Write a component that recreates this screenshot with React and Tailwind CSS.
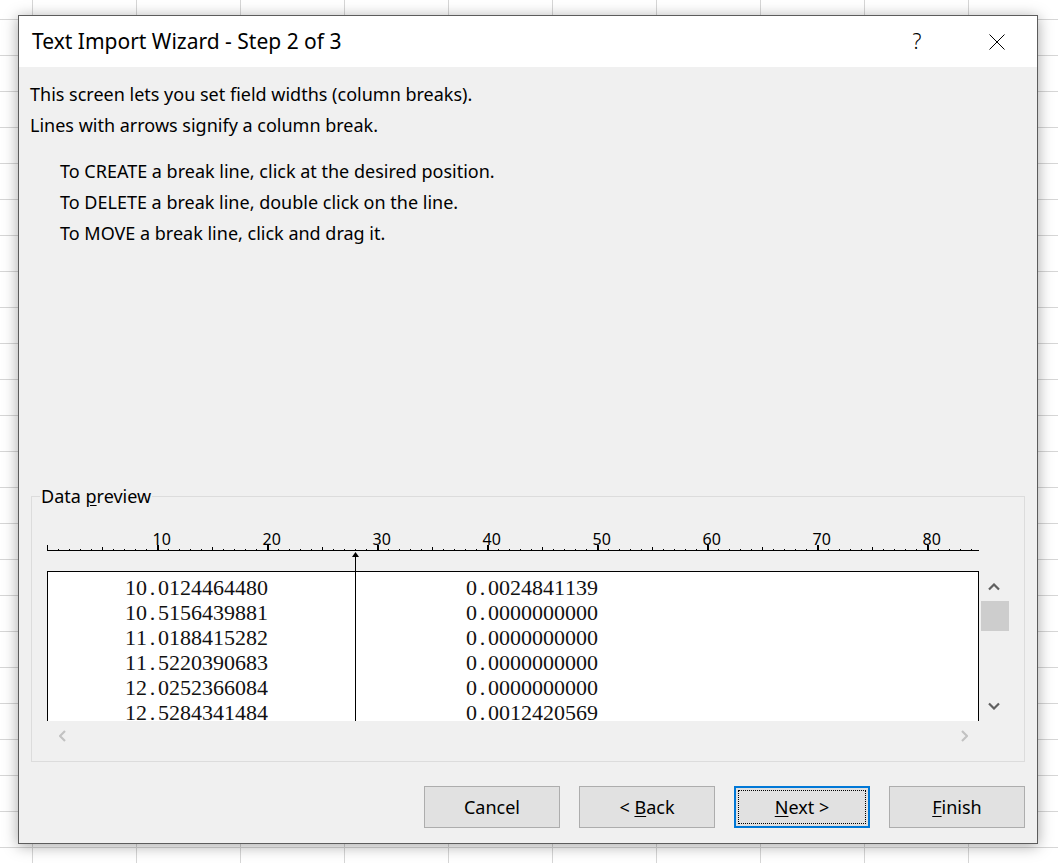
const rows = [
  ["10.0124464480", "0.0024841139"],
  ["10.5156439881", "0.0000000000"],
  ["11.0188415282", "0.0000000000"],
  ["11.5220390683", "0.0000000000"],
  ["12.0252366084", "0.0000000000"],
  ["12.5284341484", "0.0012420569"],
];

function pad(a, b) {
  return " ".repeat(7) + a + " ".repeat(38 - 7 - a.length) + b;
}

function Ruler() {
  const ticks = [];
  for (let i = 0; i <= 84; i++) {
    if (i === 0) ticks.push(<rect key={i} x={0} y={17} width={1} height={5} />);
    else if (i % 10 === 0) ticks.push(<rect key={i} x={11 * i} y={17} width={2} height={5} />);
    else if (i % 5 === 0) ticks.push(<rect key={i} x={11 * i} y={19} width={1} height={3} />);
    else ticks.push(<rect key={i} x={11 * i} y={21} width={1} height={1} />);
  }
  const labels = [10, 20, 30, 40, 50, 60, 70, 80];
  return (
    <svg width="932" height="28" className="block">
      <g fill="#000">
        {ticks}
        <rect x={0} y={22} width={932} height={1} />
      </g>
      {labels.map((n) => (
        <text key={n} x={11 * n - 4.5} y={17} fontSize="16" fontFamily="Noto Sans, sans-serif" fill="#000">
          {n}
        </text>
      ))}
    </svg>
  );
}

function Chevron({ dir, color }) {
  const pts = {
    up: "1,6.5 6,1.5 11,6.5",
    down: "1,1.5 6,6.5 11,1.5",
    left: "6,1 1,6 6,11",
    right: "1,1 6,6 1,11",
  }[dir];
  const vertical = dir === "up" || dir === "down";
  return (
    <svg width={vertical ? 12 : 7} height={vertical ? 8 : 12}>
      <polyline points={pts} fill="none" stroke={color} strokeWidth="2.2" />
    </svg>
  );
}

function Btn({ children, focused }) {
  if (focused) {
    return (
      <button className="w-[136px] h-[42px] border-2 border-[#0078d7] bg-[#e1e1e1] p-[2px]">
        <span className="flex h-full w-full items-center justify-center border border-dotted border-black">
          <span>{children}</span>
        </span>
      </button>
    );
  }
  return (
    <button className="w-[136px] h-[42px] border border-[#adadad] bg-[#e1e1e1] flex items-center justify-center">
      <span>{children}</span>
    </button>
  );
}

export default function App() {
  return (
    <div className="w-[1058px] h-[863px] overflow-hidden bg-white pt-[15px] pl-[18px] bg-[linear-gradient(to_right,#d6d6d6_1px,transparent_1px),linear-gradient(to_bottom,#d6d6d6_1px,transparent_1px)] bg-size-[104px_36px] bg-position-[32px_19px] font-['Noto_Sans',sans-serif] text-black">
      <div className="w-[1020px] h-[829px] border border-[#5c5c5c] bg-[#f0f0f0] flex flex-col shadow-[0_2px_14px_rgba(0,0,0,0.35)]">
        <div className="h-[51px] bg-white flex items-center shrink-0">
          <div className="pl-[13px] text-[21px]">Text Import Wizard - Step 2 of 3</div>
          <div className="ml-auto w-[80px] flex justify-center text-[21px] font-light">?</div>
          <div className="w-[80px] flex justify-center">
            <svg width="16" height="16">
              <path d="M0.5 0.5 L15.5 15.5 M15.5 0.5 L0.5 15.5" stroke="#000" strokeWidth="1" />
            </svg>
          </div>
        </div>

        <div className="flex-1 flex flex-col pt-[12px] text-[18px]">
          <div className="px-[11px] leading-[31px]">
            <p>This screen lets you set field widths (column breaks).</p>
            <p>Lines with arrows signify a column break.</p>
          </div>
          <div className="mt-[15px] pl-[41px] leading-[31px]">
            <p>To CREATE a break line, click at the desired position.</p>
            <p>To DELETE a break line, double click on the line.</p>
            <p>To MOVE a break line, click and drag it.</p>
          </div>

          <div className="flex-1" />

          <fieldset className="mx-[12px] border border-[#dcdcdc]">
            <legend className="ml-[8px] px-[1px] leading-[24px]">
              Data <u className="underline-offset-2">p</u>review
            </legend>
            <div className="px-[15px] pt-[20px] pb-[10px]">
              <div className="relative">
                <Ruler />
                <div className="mt-[15px] grid grid-cols-[932px_30px] grid-rows-[150px_30px]">
                  <div className="bg-white border-t border-x border-black overflow-hidden pt-[3px] font-['Liberation_Serif',serif] text-[22px] leading-[25px] text-[#111]">
                    {rows.map(([a, b], r) => (
                      <div key={r} className="flex h-[25px]">
                        {pad(a, b).split("").map((c, i) => (
                          <span key={i} className="w-[11px] shrink-0 text-center">
                            {c === " " ? "\u00a0" : c}
                          </span>
                        ))}
                      </div>
                    ))}
                  </div>
                  <div className="flex flex-col items-center">
                    <div className="h-[30px] w-full flex items-center justify-center pt-[1px]">
                      <Chevron dir="up" color="#606060" />
                    </div>
                    <div className="h-[30px] w-[28px] ml-[1px] bg-[#cdcdcd]" />
                    <div className="flex-1" />
                    <div className="h-[30px] w-full flex items-center justify-center">
                      <Chevron dir="down" color="#606060" />
                    </div>
                  </div>
                  <div className="flex items-center justify-between">
                    <div className="w-[30px] flex justify-center">
                      <Chevron dir="left" color="#c2c2c2" />
                    </div>
                    <div className="w-[30px] flex justify-center">
                      <Chevron dir="right" color="#c2c2c2" />
                    </div>
                  </div>
                  <div />
                </div>
                <svg width="7" height="169" className="absolute left-[305px] top-[24px]">
                  <polygon points="3.5,0 0,5 7,5" fill="#000" />
                  <rect x="3" y="4" width="1" height="165" fill="#000" />
                </svg>
              </div>
            </div>
          </fieldset>

          <div className="mt-[24px] mb-[15px] mr-[12px] flex justify-end gap-[19px]">
            <Btn>Cancel</Btn>
            <Btn>
              &lt;&nbsp;<u className="underline-offset-2">B</u>ack
            </Btn>
            <Btn focused>
              <u className="underline-offset-2">N</u>ext &gt;
            </Btn>
            <Btn>
              <u className="underline-offset-2">F</u>inish
            </Btn>
          </div>
        </div>
      </div>
    </div>
  );
}
